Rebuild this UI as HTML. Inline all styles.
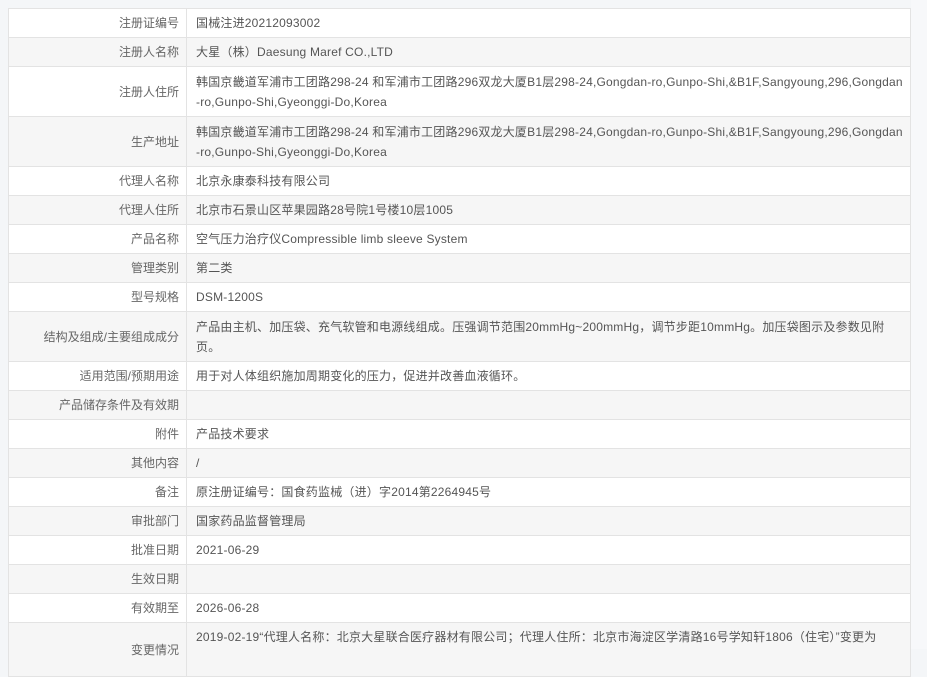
<!DOCTYPE html>
<html><head><meta charset="utf-8"><style>
body{margin:0;width:927px;height:649px;overflow:hidden;background:#f4f6f8;font-family:"Liberation Sans","Noto Sans CJK SC",sans-serif;font-size:12px;color:#555}
.wrap{position:absolute;left:8px;top:8px;width:903px;background:#fff}
table{border-collapse:collapse;width:903px}
td{border:1px solid #e3e3e3;padding:0 6px 0 9px;height:28px;line-height:20px;vertical-align:middle}
td.l{width:162px;text-align:right;color:#666;padding:0 7px 0 8px}
td.v{word-break:break-all;letter-spacing:0.2px}
tr:nth-child(even) td{background:#f6f6f6}
tr.d td{height:49px}
.side{position:absolute;left:911px;top:0;width:16px;height:649px;background:#f7f8fa}
</style></head><body>
<div class="side"></div>
<div class="wrap"><table>
<tr><td class="l">注册证编号</td><td class="v">国械注进20212093002</td></tr>
<tr><td class="l">注册人名称</td><td class="v">大星（株）Daesung Maref CO.,LTD</td></tr>
<tr class="d"><td class="l">注册人住所</td><td class="v">韩国京畿道军浦市工团路298-24 和军浦市工团路296双龙大厦B1层298-24,Gongdan-ro,Gunpo-Shi,&amp;B1F,Sangyoung,296,Gongdan-ro,Gunpo-Shi,Gyeonggi-Do,Korea</td></tr>
<tr class="d"><td class="l">生产地址</td><td class="v">韩国京畿道军浦市工团路298-24 和军浦市工团路296双龙大厦B1层298-24,Gongdan-ro,Gunpo-Shi,&amp;B1F,Sangyoung,296,Gongdan-ro,Gunpo-Shi,Gyeonggi-Do,Korea</td></tr>
<tr><td class="l">代理人名称</td><td class="v">北京永康泰科技有限公司</td></tr>
<tr><td class="l">代理人住所</td><td class="v">北京市石景山区苹果园路28号院1号楼10层1005</td></tr>
<tr><td class="l">产品名称</td><td class="v">空气压力治疗仪Compressible limb sleeve System</td></tr>
<tr><td class="l">管理类别</td><td class="v">第二类</td></tr>
<tr><td class="l">型号规格</td><td class="v">DSM-1200S</td></tr>
<tr class="d"><td class="l">结构及组成/主要组成成分</td><td class="v">产品由主机、加压袋、充气软管和电源线组成。压强调节范围20mmHg~200mmHg，调节步距10mmHg。加压袋图示及参数见附<br>页。</td></tr>
<tr><td class="l">适用范围/预期用途</td><td class="v">用于对人体组织施加周期变化的压力，促进并改善血液循环。</td></tr>
<tr><td class="l">产品储存条件及有效期</td><td class="v"></td></tr>
<tr><td class="l">附件</td><td class="v">产品技术要求</td></tr>
<tr><td class="l">其他内容</td><td class="v">/</td></tr>
<tr><td class="l">备注</td><td class="v">原注册证编号：国食药监械（进）字2014第2264945号</td></tr>
<tr><td class="l">审批部门</td><td class="v">国家药品监督管理局</td></tr>
<tr><td class="l">批准日期</td><td class="v">2021-06-29</td></tr>
<tr><td class="l">生效日期</td><td class="v"></td></tr>
<tr><td class="l">有效期至</td><td class="v">2026-06-28</td></tr>
<tr class="d"><td class="l">变更情况</td><td class="v" style="vertical-align:top;padding-top:4px">2019-02-19“代理人名称：北京大星联合医疗器材有限公司；代理人住所：北京市海淀区学清路16号学知轩1806（住宅）”变更为</td></tr>
</table></div>
</body></html>
